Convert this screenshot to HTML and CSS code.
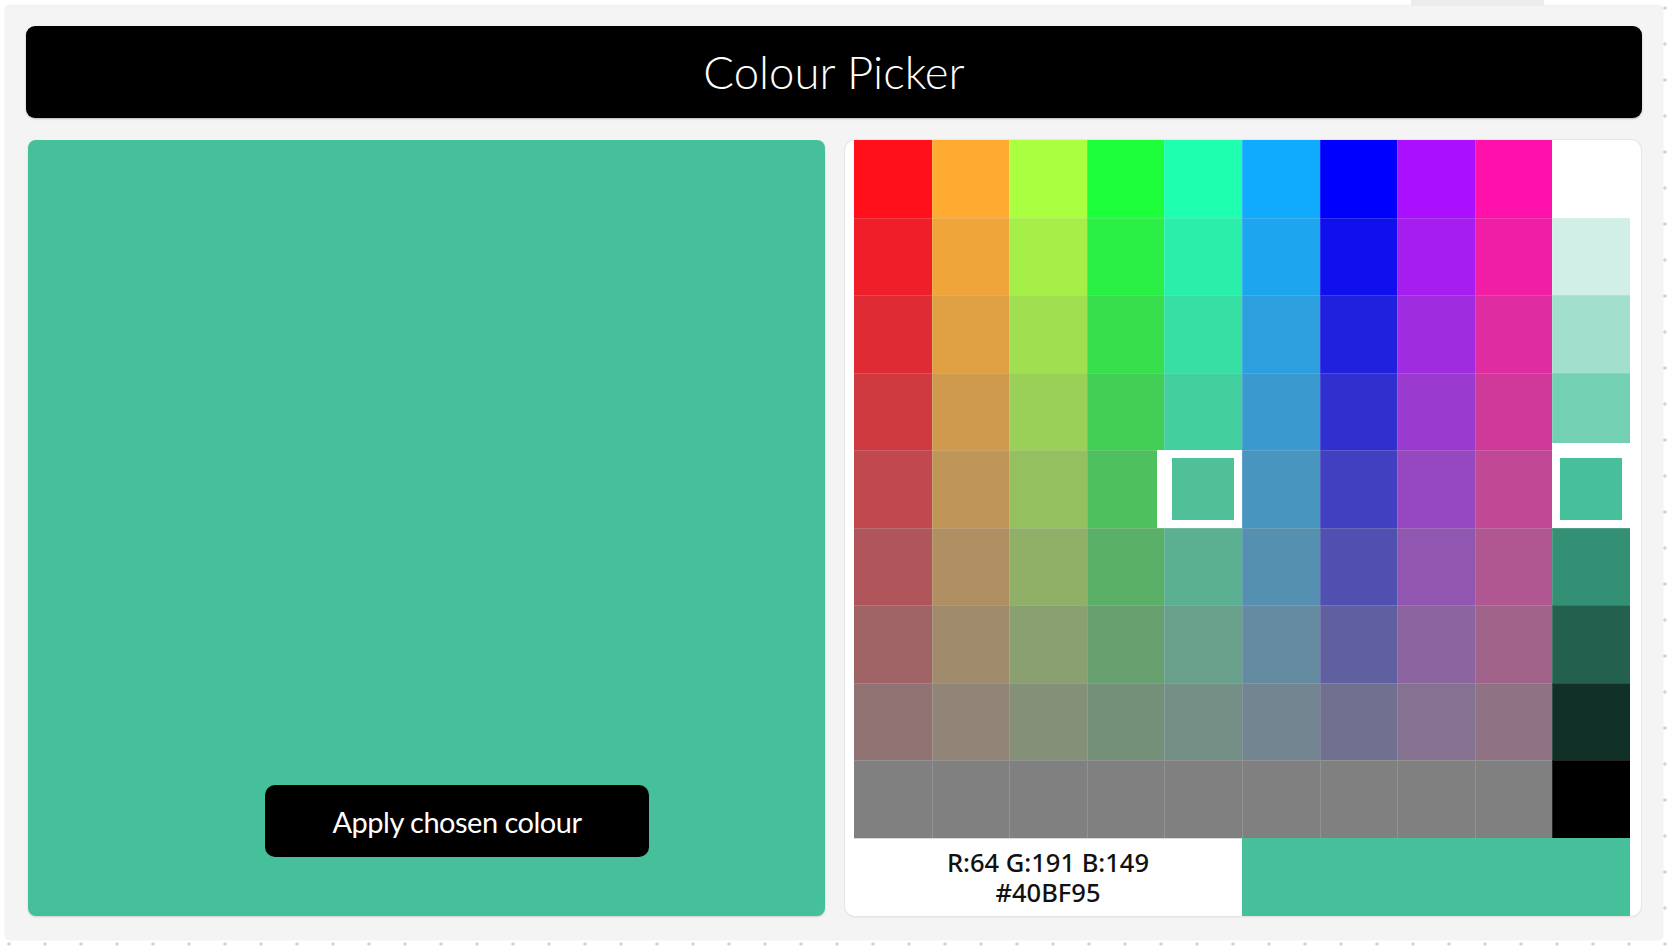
FILE: index.html
```html
<!DOCTYPE html>
<html lang="en">
<head>
<meta charset="utf-8">
<title>Colour Picker</title>
<link rel="stylesheet" href="styles.css">
</head>
<body>
<div class="topstrip"><div class="toptab"></div></div>
<main class="app">
  <header class="title-bar"><h1 class="title">Colour Picker</h1></header>
  <section class="panels">
    <div class="preview">
      <button class="apply" type="button">Apply chosen colour</button>
    </div>
    <div class="picker">
      <div class="grid" id="grid"></div>
      <div class="info">
        <div class="values">
          <div class="line">R:64 G:191 B:149</div>
          <div class="line">#40BF95</div>
        </div>
        <div class="swatch"></div>
      </div>
    </div>
  </section>
</main>
<script src="script.js"></script>
</body>
</html>
```

FILE: styles.css
```css
html, body {
  height: 100%;
}
body {
  margin: 0;
  padding: 0 5px 7px 6px;
  box-sizing: border-box;
  background-color: #ffffff;
  background-image: radial-gradient(circle, #d6d6d6 1.4px, transparent 2px);
  background-size: 36px 36px;
  background-position: -9px -10px;
  font-family: "Lato", "Liberation Sans", sans-serif;
}
.topstrip {
  height: 6px;
  display: flex;
  justify-content: flex-end;
  padding-right: 118px;
}
.toptab {
  width: 133px;
  height: 6px;
  background: #ececec;
}
.app {
  height: 933px;
  box-sizing: border-box;
  padding: 20px 20px 23px 20px;
  background: #f4f4f4;
  border-radius: 3px;
  box-shadow: 0 0 3px rgba(0, 0, 0, 0.14);
  display: flex;
  flex-direction: column;
}
.title-bar {
  height: 92px;
  background: #000;
  border-radius: 9px;
  box-shadow: 0 1px 2px rgba(0, 0, 0, 0.25);
  display: flex;
  align-items: center;
  justify-content: center;
}
.title {
  margin: 0;
  color: #fff;
  font-family: "Lato", "Liberation Sans", sans-serif;
  font-weight: 300;
  font-size: 45.5px;
  line-height: 1;
}
.panels {
  margin: 22px 1px 0 2px;
  height: 776px;
  display: grid;
  grid-template-columns: 797px 796px;
  column-gap: 20px;
}
.preview {
  background: #45c09a;
  border-radius: 8px;
  box-shadow: 0 1px 2px rgba(0, 0, 0, 0.15);
  display: flex;
  flex-direction: column;
  justify-content: flex-end;
  align-items: flex-start;
  padding: 0 0 59px 237px;
}
.apply {
  width: 384px;
  height: 72px;
  border: none;
  border-radius: 10px;
  background: #000;
  color: #fff;
  font-family: "Lato", "Liberation Sans", sans-serif;
  font-size: 29px;
  letter-spacing: -0.5px;
  font-weight: 400;
  padding: 0;
  cursor: pointer;
}
.picker {
  background: #fff;
  border-radius: 10px;
  box-shadow: 0 0 0 1px #e6e6e6, 0 1px 2px rgba(0, 0, 0, 0.12);
  padding: 0 11px 0 9px;
  display: flex;
  flex-direction: column;
}
.grid {
  height: 698px;
  display: grid;
  grid-template-columns: repeat(10, 1fr);
  grid-template-rows: repeat(9, 1fr);
}
.cell {
  box-shadow: inset 1px 1px 0 rgba(255, 255, 255, 0.14);
}
.cell.top {
  box-shadow: inset 1px 0 0 rgba(255, 255, 255, 0.14);
}
.cell.left {
  box-shadow: inset 0 1px 0 rgba(255, 255, 255, 0.14);
}
.cell.top.left {
  box-shadow: none;
}
.cell.selected {
  border: 8px solid #fff;
}
.cell.sel-h {
  box-shadow: -7px 0 0 #fff;
}
.cell.sel-v {
  box-shadow: 0 -7px 0 #fff;
}
.info {
  height: 78px;
  display: grid;
  grid-template-columns: 1fr 1fr;
  border-top: 1px solid #d9d9d9;
  box-sizing: border-box;
}
.values {
  display: flex;
  flex-direction: column;
  align-items: center;
  justify-content: center;
  padding-bottom: 2px;
  font-family: "Noto Sans", "Open Sans", sans-serif;
  font-weight: 500;
  font-size: 25.5px;
  color: #111;
}
.line {
  line-height: 30px;
  height: 30px;
}
.swatch {
  background: #45c09a;
  margin-top: -1px;
}
```

FILE: script.js
```js
(function () {
  var bases = [
    [255, 16, 27],
    [255, 170, 48],
    [170, 255, 64],
    [30, 255, 60],
    [30, 255, 176],
    [16, 170, 255],
    [0, 0, 255],
    [170, 16, 255],
    [255, 16, 170]
  ];
  var sel = [69, 192, 154];
  var grid = document.getElementById('grid');
  function mix(a, b, t) {
    return a.map(function (v, i) { return Math.round(v * (1 - t) + b[i] * t); });
  }
  for (var r = 0; r < 9; r++) {
    for (var c = 0; c < 10; c++) {
      var d = document.createElement('div');
      var cls = ['cell'];
      if (r === 0) cls.push('top');
      if (c === 0) cls.push('left');
      var col;
      if (c < 9) {
        col = mix(bases[c], [128, 128, 128], r / 8);
      } else {
        if (r <= 4) col = mix([255, 255, 255], sel, r / 4);
        else col = mix(sel, [0, 0, 0], (r - 4) / 4);
      }
      if (r === 4 && c === 4) cls.push('selected', 'sel-h');
      if (r === 4 && c === 9) cls.push('selected', 'sel-v');
      d.className = cls.join(' ');
      d.style.background = 'rgb(' + col.join(',') + ')';
      grid.appendChild(d);
    }
  }
})();
```
